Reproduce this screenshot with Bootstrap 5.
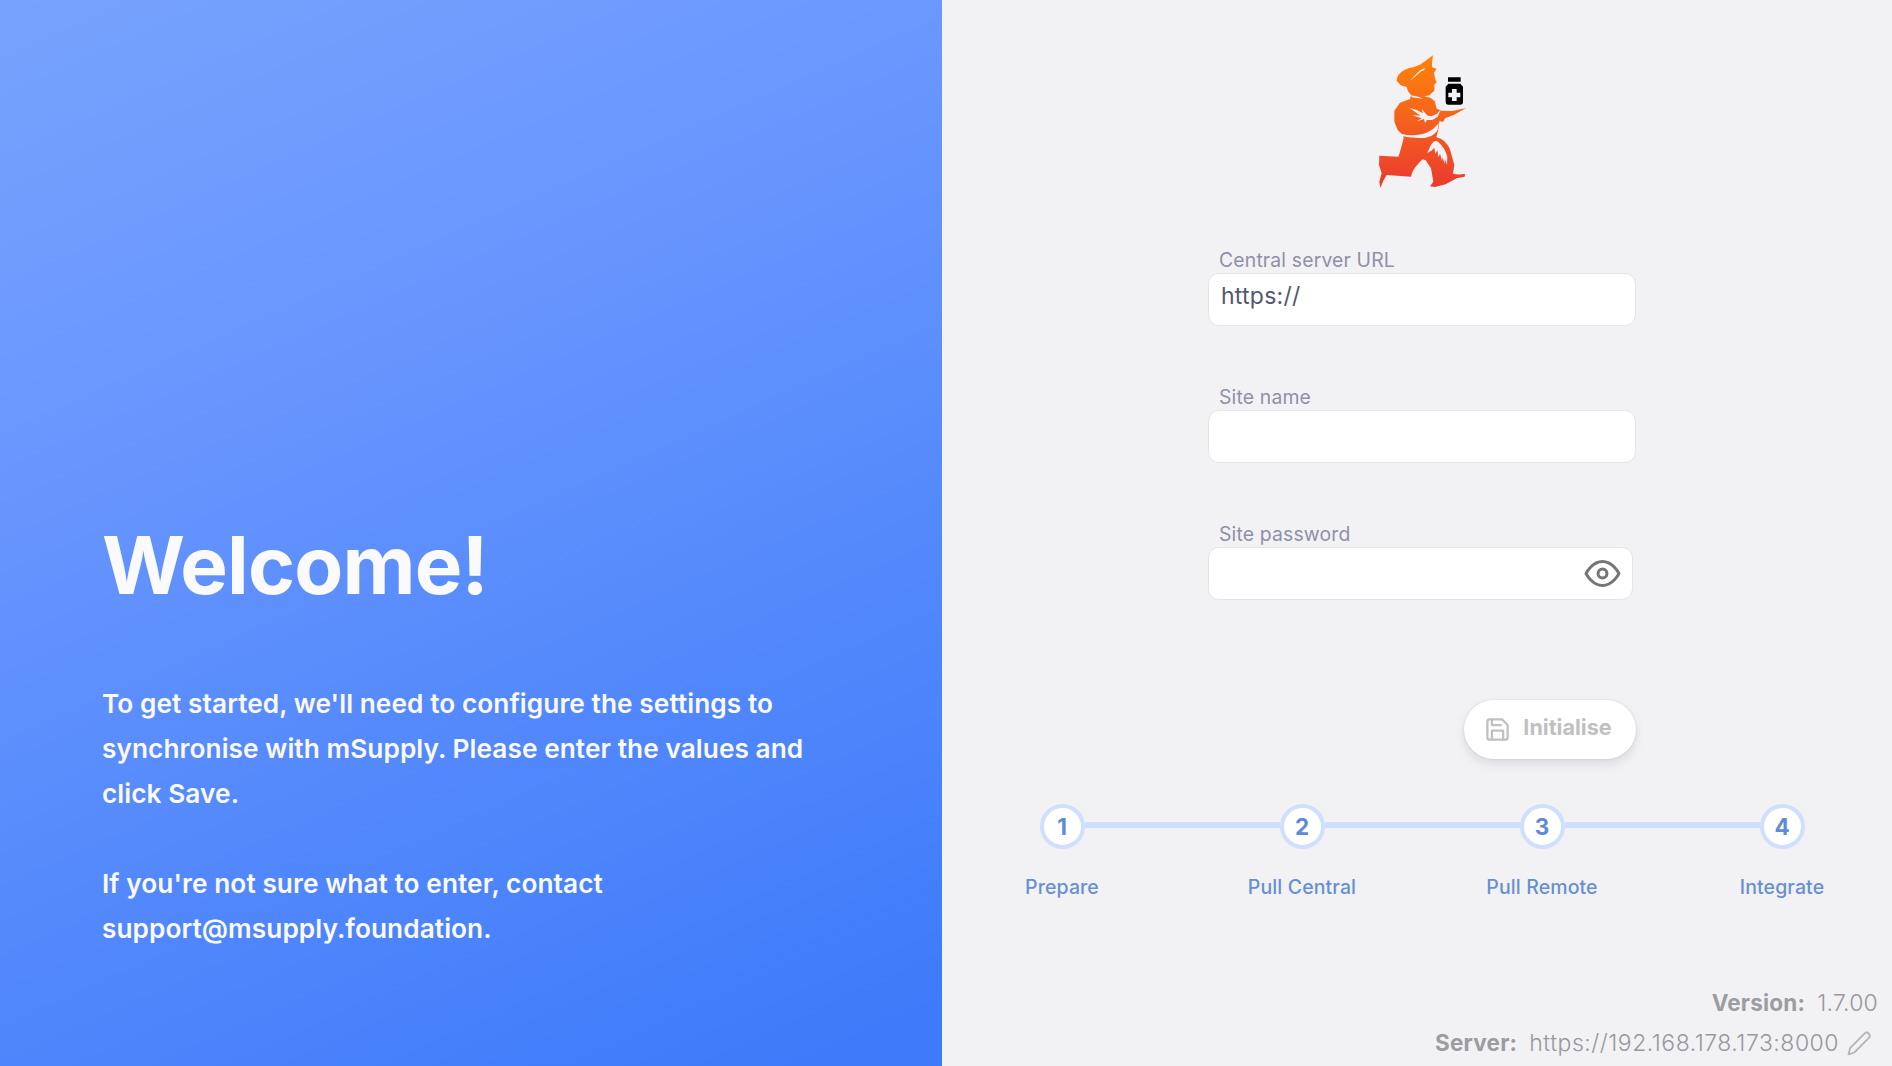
<!DOCTYPE html>
<html lang="en">
<head>
<meta charset="utf-8">
<title>Initialise</title>
<link href="https://cdn.jsdelivr.net/npm/bootstrap@5.3.0/dist/css/bootstrap.min.css" rel="stylesheet">
<style>
body{font-family:Inter,"Liberation Sans",sans-serif;background:#f2f2f5;height:1066px;overflow:hidden}
.welcome-pane{width:942px;padding:0 102px 115px;color:#fafafc;background:linear-gradient(156deg,#77a3fd 0%,#6b98fe 28%,#3e7bfa 96%)}
.welcome-title{font-size:80px;font-weight:700;line-height:100px;margin-bottom:66px;letter-spacing:-.8px}
.welcome-copy{font-size:26.25px;font-weight:600;line-height:45px;letter-spacing:.06px}
.setup-pane{padding-top:45px}
.setup-form{width:428px;margin-top:52px}
.field-label{font-size:19.4px;line-height:26px;padding-left:11px;height:26px;color:#8f90a6;letter-spacing:.15px}
.form-control.site-input{height:53px;border:1px solid #e4e4eb;border-radius:11px;font-size:23px;line-height:28px;padding:8px 12px 15px;color:#555770;background:#fff;letter-spacing:.25px}
.field-block{height:137px}
.pass-row{width:425px}
.eye-btn{right:12px;top:8px;color:#757575}
.init-btn{width:172px;height:59px;border-radius:30px;background:#fff;color:#c0c0c1;font-size:21.6px;font-weight:700;box-shadow:0 0 2px rgba(40,41,61,.16),0 5px 10px rgba(96,97,112,.16);padding:0 4px 0 0;margin-top:42px;gap:12px}
.init-btn span{padding-bottom:4px}
.steps-row{width:960px;margin-top:45px}
.step-col{width:240px}
.step-dot{width:45px;height:45px;border:4px solid #d0dffb;background:#fff;color:#5f8ad5;font-size:22.5px;font-weight:700}
.step-bar{height:6px;background:#cfdefb;margin-bottom:3px}
.step-name{font-size:19.5px;font-weight:500;color:#688fd3;line-height:26px;margin-top:25px;letter-spacing:.12px}
.build-info{font-size:23px;font-weight:300;line-height:40px;color:#98989d;padding-right:24px;padding-bottom:3px}
.build-info b{font-size:22.5px;font-weight:700;letter-spacing:.2px;color:#9c9ca1}
.version-value{letter-spacing:.2px}
.server-value{letter-spacing:.5px}
</style>
</head>
<body class="d-flex">
<section class="welcome-pane h-100 d-flex flex-column justify-content-end flex-shrink-0">
  <h1 class="welcome-title">Welcome!</h1>
  <div class="welcome-copy">To get started, we'll need to configure the settings to<br>synchronise with mSupply. Please enter the values and<br>click Save.<br><br>If you're not sure what to enter, contact<br>support@msupply.foundation.</div>
</section>
<main class="setup-pane h-100 flex-grow-1 d-flex flex-column align-items-center">
  <svg width="115" height="150" viewBox="-30 -15 345 450" class="flex-shrink-0">
    <defs><linearGradient id="flame" x1="0" y1="0" x2="0" y2="1"><stop offset="0" stop-color="#ff8408"/><stop offset=".5" stop-color="#f5601d"/><stop offset="1" stop-color="#ea3a30"/></linearGradient></defs>
    <path fill="url(#flame)" d="M174 16L171 38L171 52L185 56L177 68L181 88L185 97L178 104L178 122L163 136L148 139L166 143L179 153L185 176L200 182L232 183L273 174L238 194L210 205L204 216L193 213L190 240L184 262C205 266 222 285 227 305L238 345L234 371C250 376 265 371 270 372L269 380L245 385L212 403L180 411L165 409L175 395L168 355L152 331L143 328C125 345 112 360 108 380L35 375L25 392L16 414L13 395L20 370L12 345L13 317L70 320L75 305L86 265L83 254L68 240L58 215L58 182L75 158L105 147L108 135L99 124L95 111L77 106L65 92C66 70 90 55 115 52L135 44Z"/>
    <path fill="#f2f2f5" d="M107 91C120 75 135 58 150 54L147 61L140 63C130 70 120 80 107 91ZM108 136L130 140L145 146L110 142ZM103 173L125 180L144 190L140 177L158 197L170 199L186 191L198 178L188 200L172 210L156 210L150 219L147 207L126 214L140 205L112 196L136 197L124 188ZM80 252C120 261 165 255 191 219L188 239C180 255 160 264 140 264C115 264 100 262 83 259Z"/>
    <path fill="#f2f2f5" d="M157 309L166 288C172 278 178 272 185 273C203 285 214 305 217 322L216 345L210 328L209 342L203 322L201 332L195 311L190 322L187 300L181 311L178 293L169 302Z"/>
    <path d="M219 82H257V95H219ZM220 101H256L264 110V157Q264 164 257 164H219Q212 164 212 157V110Z"/>
    <path fill="#f2f2f5" d="M231 117H245V128H256V142H245V153H231V142H220V128H231Z"/>
  </svg>
  <form class="setup-form d-flex flex-column">
    <div class="field-block">
      <label class="field-label d-block" for="url">Central server URL</label>
      <input class="form-control site-input" id="url" type="text" value="https://">
    </div>
    <div class="field-block">
      <label class="field-label d-block" for="site">Site name</label>
      <input class="form-control site-input" id="site" type="text">
    </div>
    <div class="field-block">
      <label class="field-label d-block" for="pass">Site password</label>
      <div class="pass-row position-relative">
        <input class="form-control site-input" id="pass" type="password">
        <svg class="eye-btn position-absolute" width="37" height="37" viewBox="0 0 24 24" fill="none" stroke="currentColor" stroke-width="1.95" stroke-linecap="round" stroke-linejoin="round"><path d="M1.3 12S5.2 4.2 12 4.2 22.7 12 22.7 12 18.8 19.8 12 19.8 1.3 12 1.3 12Z"/><circle cx="12" cy="12" r="2.9"/></svg>
      </div>
    </div>
    <button type="button" class="btn init-btn align-self-end d-flex align-items-center justify-content-center">
      <svg width="27" height="27" viewBox="0 0 24 24" fill="none" stroke="currentColor" stroke-width="2" stroke-linecap="round" stroke-linejoin="round"><path d="M19 21H5a2 2 0 0 1-2-2V5a2 2 0 0 1 2-2h11l5 5v11a2 2 0 0 1-2 2z"/><path d="M17 21v-8H7v8M7 3v5h8"/></svg>
      <span>Initialise</span>
    </button>
  </form>
  <div class="steps-row d-flex">
    <div class="step-col text-center"><div class="d-flex align-items-center"><i class="flex-fill"></i><span class="step-dot rounded-circle d-flex align-items-center justify-content-center">1</span><i class="flex-fill step-bar"></i></div><div class="step-name">Prepare</div></div>
    <div class="step-col text-center"><div class="d-flex align-items-center"><i class="flex-fill step-bar"></i><span class="step-dot rounded-circle d-flex align-items-center justify-content-center">2</span><i class="flex-fill step-bar"></i></div><div class="step-name">Pull Central</div></div>
    <div class="step-col text-center"><div class="d-flex align-items-center"><i class="flex-fill step-bar"></i><span class="step-dot rounded-circle d-flex align-items-center justify-content-center">3</span><i class="flex-fill step-bar"></i></div><div class="step-name">Pull Remote</div></div>
    <div class="step-col text-center"><div class="d-flex align-items-center"><i class="flex-fill step-bar"></i><span class="step-dot rounded-circle d-flex align-items-center justify-content-center">4</span><i class="flex-fill"></i></div><div class="step-name">Integrate</div></div>
  </div>
  <footer class="build-info align-self-end mt-auto text-end">
    <div><b>Version:</b><span class="version-value ms-2 ps-1">1.7.00</span></div>
    <div class="d-flex align-items-center justify-content-end pe-1"><b>Server:</b><span class="server-value ms-2 ps-1">https://192.168.178.173:8000</span>
      <svg class="ms-2" width="27" height="27" viewBox="0 0 24 24" fill="none" stroke="#b5b5b9" stroke-width="1.6" stroke-linecap="round" stroke-linejoin="round"><path d="M15.5 3.2a2.6 2.6 0 0 1 3.9 3.9L6.5 20 1.3 21.7 2.7 16.2Z"/></svg></div>
  </footer>
</main>
<script src="https://cdn.jsdelivr.net/npm/bootstrap@5.3.0/dist/js/bootstrap.bundle.min.js"></script>
</body>
</html>
